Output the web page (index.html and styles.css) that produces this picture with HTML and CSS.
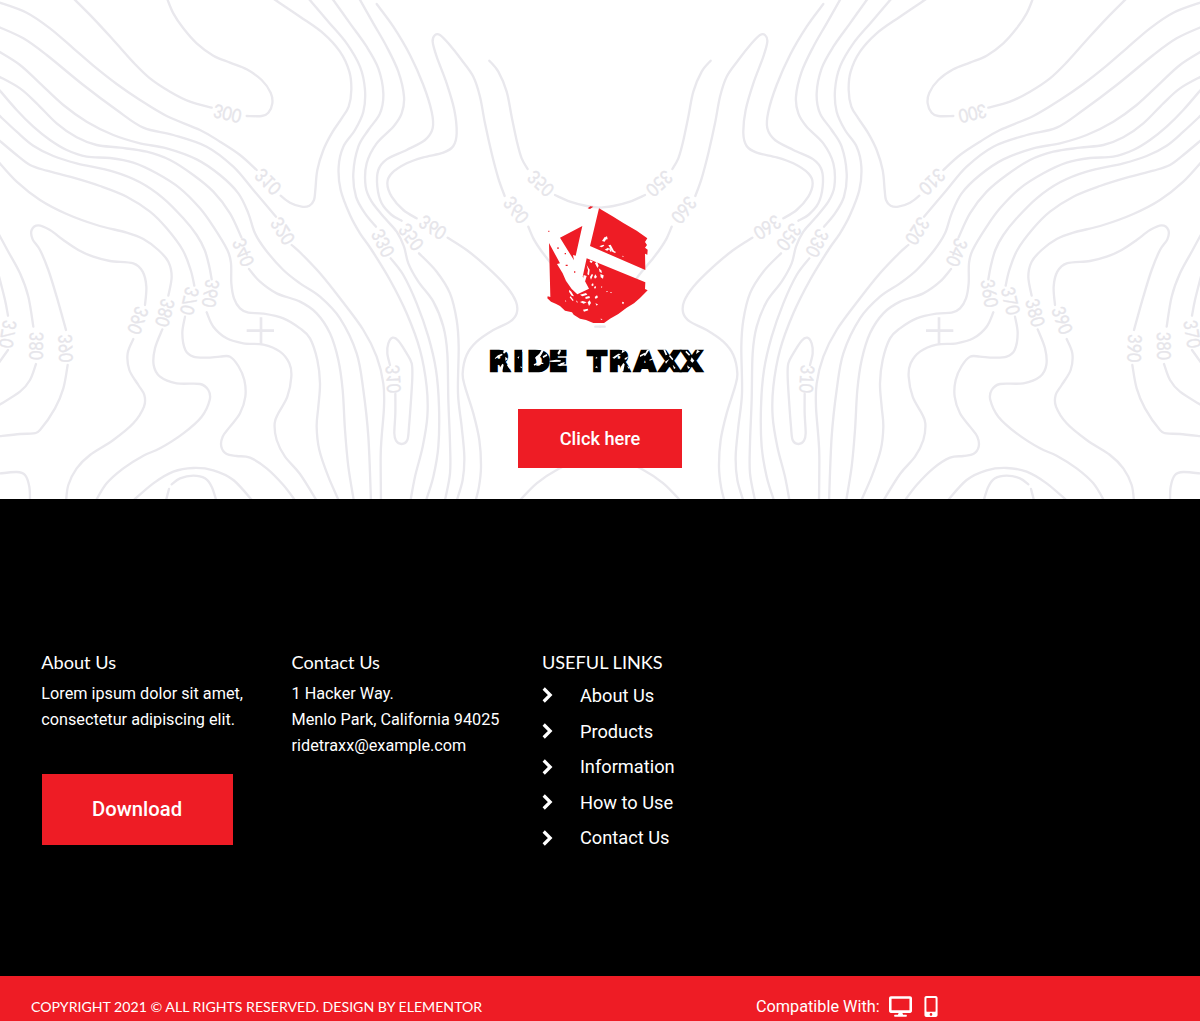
FILE: index.html
```html
<!DOCTYPE html>
<html lang="en">
<head>
<meta charset="utf-8">
<title>Ride Traxx</title>
<link rel="stylesheet" href="styles.css">
</head>
<body>
<section class="hero">
  <svg class="topo" viewBox="0 0 3600 1497" aria-hidden="true">
    <defs>
      <g id="half">
        <g id="lines" class="topo-lines"></g>
        <path class="topo-cross" d="M740 992H822M783 952V1035"/>
        <g id="labels" class="topo-labels"></g>
      </g>
    </defs>
    <use href="#half"/>
    <use href="#half" transform="translate(3600 0) scale(-1 1)"/>
  </svg>
  <svg class="logo" viewBox="0 0 720 540" role="img" aria-label="Ride Traxx">
    <g class="logo-mark">
      <path d="M357 40L400 65L430 84L470 107L502 130L495 141L501 150L495 158L503 164L502 179L495 176L496 225L330 153Z"/>
      <path d="M240 128L307 93L287 182L279 180L282 196Z"/>
      <path d="M207 144L240 205L231 207L248 235L258 258L275 282L292 298L327 281L308 245L320 190L496 262L495 282L503 286L480 309L462 325L440 338L415 357L390 371L372 384L340 384L318 375L300 371L281 359L276 352L255 347L240 333L227 326L213 320L202 310L203 304L211 306Z"/>
      <path d="M323 40L331 34L340 35L330 42ZM205 107h3v4h-3ZM232 157h4v5h-4ZM254 174h4v4h-4ZM257 209h6v4h-6ZM282 229h4v4h-4Z"/>
    </g>
    <path class="logo-wear" d="M366 138l8-12 6 4-6 10ZM376 126l5-2 2 8-3 2ZM385 151l7-2 10 19 6 3-3 3-8-4ZM358 154l12-5 3 3-8 5ZM374 164l10-6 4 4-6 5ZM390 159l5 10-3 2-5-9ZM427 182l5 2-4 2ZM320 210l9 14-2 17-5-3 2-12ZM311 240l9 3-6 20-6-5ZM330 246l6-10 3 4-6 14ZM345 205l6-5 5 12-3 7-4-6ZM356 220l8 6 2 8-7-3ZM361 237l10 4-2 10-7-4ZM346 238l5 8-6 5-3-5ZM330 196l8 3-3 5-6-3ZM268 284l6 6 8 14-7-2-8-12ZM272 304l9 12-3 2-9-11ZM300 299l18-5 4 5-15 5ZM316 306l12-3 2 6-13 3ZM300 321l8-3 12 4-9 4ZM323 322l6-6 4 8-6 9ZM309 344l14-3 2 5-13 4ZM344 306l7-5 3 6-7 5ZM342 276l5-3 1 6-4 2ZM363 274l4 1-2 5ZM378 289l6-1-3 4ZM427 320l5 2-2 6-4-3ZM390 291l6 1-3 3ZM361 371l7 1-4 3ZM334 269l5-5 2 7-5 3ZM290 316l4 7-5-2ZM346 325l8 3-4 4ZM280 270l6 8-4 1ZM256 315l3 5-4-1Z"/>
    <text class="logo-word" y="527" x="26 100 142 206 323 386 463 537 604">RIDETRAXX</text>
    <path class="logo-wear" d="M42 492l12-11 12-5 2 4-15 8ZM75 461l9 5-12 10-3-4ZM76 485l8 7-8 5ZM59 520l8-14 4 3-4 20h-7ZM85 506l8 12-5 3-7-10ZM112 487l6-3-2 7ZM126 464l5 5-4 2ZM122 513l5 5-5 1ZM165 488l13-12 8-13 5 4-9 16-12 14ZM161 508l16-7 14 3-2 3-14-1-12 6ZM188 484l12-7 2 5-12 7ZM209 497l20-3 14 2-2 4-22 1-10-1ZM232 475l7-12 4 4-6 13ZM242 505l12-4-1 5-13 8-4-3ZM348 485l5 4-6 2ZM345 517l6-4 2 7ZM397 488l18-12 8 1-20 14ZM427 464l8 5-10 6ZM435 489l11-5-8 10-5-1ZM422 516l8-12 4 4-4 21h-6ZM441 513l9 5-4 3ZM480 481l14-8 2 5-16 8ZM501 465l9-3-15 22-3-3ZM508 494l18-8 1 4-18 7ZM555 463l7 16-5 2-7-17ZM570 480l10 12-3 4-10-12ZM555 500l13-8-10 14ZM578 509l9 10-5 3ZM619 467l12 12-4 3-11-11ZM635 487l8 10-6 6-6-6ZM621 511l10 7-7 3ZM651 465l9 4-12 8ZM656 502l12 10-5 4Z"/>
  </svg>
  <a class="btn btn-hero">Click here</a>
</section>

<footer class="footer">
  <div class="col">
    <h2>About Us</h2>
    <p>Lorem ipsum dolor sit amet,<br>consectetur adipiscing elit.</p>
    <a class="btn btn-download">Download</a>
  </div>
  <div class="col">
    <h2>Contact Us</h2>
    <p>1 Hacker Way.<br>Menlo Park, California 94025<br>ridetraxx@example.com</p>
  </div>
  <div class="col">
    <h2>USEFUL LINKS</h2>
    <ul class="links">
      <li><svg viewBox="0 0 12 18"><path d="M1.700 2.500L8.200 9L1.700 15.500"/></svg>About Us</li>
      <li><svg viewBox="0 0 12 18"><path d="M1.700 2.500L8.200 9L1.700 15.500"/></svg>Products</li>
      <li><svg viewBox="0 0 12 18"><path d="M1.700 2.500L8.200 9L1.700 15.500"/></svg>Information</li>
      <li><svg viewBox="0 0 12 18"><path d="M1.700 2.500L8.200 9L1.700 15.500"/></svg>How to Use</li>
      <li><svg viewBox="0 0 12 18"><path d="M1.700 2.500L8.200 9L1.700 15.500"/></svg>Contact Us</li>
    </ul>
  </div>
</footer>

<div class="bottom">
  <div class="copyright">COPYRIGHT 2021 © ALL RIGHTS RESERVED. DESIGN BY ELEMENTOR</div>
  <div class="compat">
    <span>Compatible With:</span>
    <svg class="desktop" viewBox="0 0 576 512"><path d="M528 0H48C21.500 0 0 21.500 0 48v320c0 26.500 21.500 48 48 48h192l-16 48h-72c-13.300 0-24 10.700-24 24s10.700 24 24 24h272c13.300 0 24-10.700 24-24s-10.700-24-24-24h-72l-16-48h192c26.500 0 48-21.500 48-48V48c0-26.500-21.500-48-48-48zm-16 352H64V64h448v288z"/></svg>
    <svg class="mobile" viewBox="0 0 320 512"><path d="M272 0H48C21.500 0 0 21.500 0 48v416c0 26.500 21.500 48 48 48h224c26.500 0 48-21.500 48-48V48c0-26.500-21.500-48-48-48zM160 480c-17.700 0-32-14.300-32-32s14.300-32 32-32 32 14.300 32 32-14.300 32-32 32zm112-108c0 6.600-5.400 12-12 12H60c-6.600 0-12-5.400-12-12V60c0-6.600 5.400-12 12-12h200c6.600 0 12 5.400 12 12v312z"/></svg>
  </div>
</div>
<script src="contours.js"></script>
</body>
</html>
```

FILE: styles.css
```css
* { box-sizing: border-box; }

body {
  margin: 0;
  height: 1021px;
  display: flex;
  flex-direction: column;
  overflow: hidden;
  background: #000;
  color: #fff;
  font-family: Roboto, "Liberation Sans", sans-serif;
}

.hero {
  position: relative;
  flex: none;
  height: 499px;
  padding-top: 195px;
  display: flex;
  flex-direction: column;
  align-items: center;
  background: #fff;
}

.topo {
  position: absolute;
  top: 0;
  left: 0;
  width: 1200px;
  height: 499px;
}

.topo-lines, .topo-cross {
  fill: none;
  stroke: #e9e8ed;
  stroke-width: 7;
  stroke-linecap: round;
}
.topo-cross { stroke-width: 8; stroke-linecap: butt; }
.topo-labels {
  fill: #e6e5ea;
  stroke: #e6e5ea;
  stroke-width: 1;
  font-family: Lato, sans-serif;
  font-size: 57px;
  text-anchor: middle;
}

.logo {
  position: relative;
  width: 240px;
  height: 180px;
  overflow: visible;
}
.logo-mark { fill: #ee1c25; }
.logo-wear { fill: #fff; }
.logo-word {
  fill: #000;
  stroke: #000;
  stroke-width: 8;
  font-family: "DejaVu Sans", sans-serif;
  font-weight: 700;
  font-size: 82px;
}

.btn {
  display: flex;
  align-items: center;
  justify-content: center;
  background: #ee1c25;
  color: #fff;
  font-weight: 500;
}
.btn-hero {
  position: relative;
  width: 164px;
  height: 59px;
  margin-top: 34.4px;
  padding-bottom: 1px;
  font-size: 18.200px;
}

.footer {
  flex: none;
  height: 477.4px;
  padding: 149.500px 0 0 41.300px;
  display: grid;
  grid-template-columns: repeat(3, 250.300px);
  align-content: start;
}
.footer h2 {
  margin: 0;
  font: 400 18.150px/26px Lato, sans-serif;
}
.footer p {
  margin: 6px 0 0;
  font-size: 16.230px;
  line-height: 26.400px;
  white-space: nowrap;
}
.btn-download {
  width: 191px;
  height: 71px;
  margin: 40.500px 0 0 0.300px;
  font-size: 20.250px;
}

.links {
  margin: 3.200px 0 0;
  padding: 0;
  list-style: none;
}
.links li {
  display: flex;
  align-items: center;
  gap: 26px;
  height: 35.550px;
  font-size: 18.250px;
}
.links svg {
  width: 12px;
  height: 18px;
  fill: none;
  stroke: #fff;
  stroke-width: 3.200;
}

.bottom {
  flex: none;
  height: 60px;
  padding-left: 31px;
  display: grid;
  grid-template-columns: 725px 1fr;
  align-items: center;
  background: #ee1c25;
}
.copyright {
  font-family: Lato, sans-serif;
  font-size: 14.130px;
}
.compat {
  display: flex;
  align-items: center;
  font-size: 16.250px;
}
.compat svg { fill: #fff; }
.desktop { width: 23px; height: 21px; margin-left: 9px; }
.mobile { width: 14px; height: 21px; margin-left: 12px; }
```

FILE: contours.js
```js
// Elevation contours for one half of the map; the other half is its mirror.
const contours = [
  "820,-4 900,50 970,100 1020,155 1048,215 1054,270 1046,320 1025,355 995,400 970,450 952,510 946,570 942,600 928,617 905,620 870,608 842,587",
  "770,510 720,465 660,425 600,390 500,348 420,300 350,252 280,197 220,145 150,85 80,38 -6,6",
  "220,-5 280,55 340,120 400,187 450,235 510,275 570,305 635,323",
  "501,-5 520,40 550,85 590,130 640,167 690,188 740,208 785,240 812,278 817,310 805,338 785,348 740,348",
  "-6,80 70,115 140,165 250,255 350,330 430,383 520,405 620,440 700,500 760,570 828,650",
  "875,735 905,762 960,820 1020,895 1090,990 1130,1070 1150,1150 1152,1220 1145,1310 1142,1370 1143,1505",
  "-6,153 60,195 120,250 190,315 260,365 340,405 420,430 500,445 590,478 660,525 715,580 745,640 765,700 797,750 850,810 900,850 960,890 1020,955 1070,1060 1090,1170 1105,1310 1113,1505",
  "-6,228 60,265 110,310 170,370 230,412 290,435 360,443 440,455 510,480 580,525 640,575 690,640 724,712",
  "747,807 780,845 830,880 900,905 950,940 990,1000 1015,1080 1028,1170 1035,1290 1045,1400 1062,1505",
  "-6,265 50,330 100,380 150,420 200,450 260,470 330,474 400,488 470,520 540,565 600,625 640,680 682,750 693,790 694,850 702,895 720,925 745,938 790,941 850,955 900,985 930,1015 952,1080 960,1150 955,1220 950,1280 958,1350 985,1430 1018,1505",
  "-6,343 50,395 100,437 160,468 230,490 340,515 420,547 490,595 550,655 590,705 614,750 628,800 635,838",
  "620,937 640,980 680,1015 730,1030 790,1034 840,1055 868,1090 874,1130 862,1190 835,1240 824,1270 830,1320 855,1370 900,1422 952,1505",
  "-6,418 50,465 90,495 140,512 220,533 300,558 380,590 450,635 500,685 548,750 572,810 583,857",
  "555,950 547,1000 556,1050 580,1070 620,1073 660,1070 690,1070 715,1098 733,1140 736,1190 720,1240 690,1280 668,1310 664,1340 680,1362 710,1368 750,1373 800,1405 850,1455 888,1505",
  "-6,484 50,545 120,600 200,642 290,675 380,698 430,717 475,750 505,785 515,830 505,887",
  "487,988 465,1045 461,1095 480,1130 530,1150 600,1152 625,1170 629,1200 605,1250 550,1300 480,1345 430,1367 370,1405 320,1450 286,1505",
  "198,990 170,890 145,810 120,750 98,718 95,690 115,676 150,690 190,720 235,750 280,770 330,783 400,790 428,815 439,860 435,915",
  "400,1017 383,1060 388,1110 415,1155 433,1185 432,1220 400,1270 340,1320 270,1365 230,1405 205,1455 198,1505",
  "203,1095 190,1165 165,1225 120,1290 100,1300 60,1302 -6,1309",
  "-6,698 22,750 60,820 85,890 100,980",
  "108,1092 90,1140 60,1175 -6,1217",
  "-4,825 15,900 24,947",
  "24,1050 -6,1092",
  "-6,1421 50,1416 75,1425 88,1460 90,1505",
  "396,1505 460,1450 520,1415 580,1404 640,1411 700,1440 760,1505",
  "515,1453 540,1435 580,1427 615,1435 635,1460 650,1505",
  "507,1467 497,1505",
  "926,-4 985,65 1040,130 1080,200 1095,270 1090,335 1065,390 1030,440 1016,500 1022,570 1050,645 1080,700 1115,750 1170,840 1220,940 1260,1050 1280,1160 1282,1250 1268,1340 1245,1430 1231,1505",
  "997,-4 1050,70 1100,140 1135,205 1150,280 1140,340 1105,390 1075,440 1060,520 1068,590 1095,640 1128,680",
  "1172,775 1210,825 1250,910 1285,1010 1308,1110 1317,1220 1315,1340 1300,1430 1277,1505",
  "1078,-4 1120,70 1160,140 1195,215 1212,290 1205,340 1180,380 1130,430 1100,490 1097,560 1115,605 1155,655 1190,695 1212,740 1225,790 1255,845 1300,905 1330,980 1342,1060 1345,1200 1350,1330 1350,1420 1334,1505",
  "1130,12 1180,80 1230,165 1270,255 1295,335 1298,385 1275,420 1220,450 1160,478 1135,510 1132,560 1145,610 1175,645 1205,662",
  "1257,760 1310,815 1350,880 1370,960 1376,1040 1374,1180 1385,1280 1393,1370 1388,1440 1369,1505",
  "1250,655 1210,630 1175,590 1162,550 1175,520 1220,490 1270,472 1330,458 1360,438 1370,400 1363,330 1340,250 1310,170 1298,125 1305,105 1320,105 1345,130 1385,180 1420,230 1440,290 1455,370 1475,460 1495,535 1514,588",
  "1585,680 1600,715 1622,750 1645,780 1690,835 1740,915",
  "1786,980 1800,980",
  "1343,713 1400,750 1460,800 1520,860 1548,905 1550,940 1530,965 1480,990 1430,1025 1400,1065 1388,1120 1395,1160 1420,1240 1438,1320 1443,1400 1437,1460 1426,1505",
  "1468,182 1495,215 1520,275 1535,350 1552,430 1565,475 1583,507",
  "1665,585 1710,605 1760,618 1800,623",
  "1170,1095 1162,1060 1165,1030 1178,1013 1195,1022 1220,1060 1235,1090 1237,1130 1233,1200 1227,1280 1222,1320 1205,1332 1188,1322 1183,1300 1186,1240 1186,1182",
  "1556,1505 1610,1450 1675,1407 1740,1380 1800,1370"
];

// value, x, y, rotation
const labels = [
  [300, 682, 340, 167], [310, 804, 545, 135], [320, 848, 693, 123], [340, 730, 757, 112],
  [350, 1622, 550, 137], [360, 1548, 630, 128], [360, 1298, 682, 147], [350, 1233, 711, 126],
  [330, 1149, 729, 117], [360, 632, 880, 81], [370, 569, 903, 77], [380, 495, 938, 75],
  [390, 414, 961, 70], [390, 197, 1045, 92], [380, 109, 1038, 89], [370, 24, 1002, 81],
  [310, 1180, 1137, 94]
];

const NS = "http://www.w3.org/2000/svg";

// Smooth curve through every point (Catmull-Rom converted to Bezier segments).
function curve(list) {
  const p = list.split(" ").map(s => s.split(",").map(Number));
  let d = "M" + p[0];
  for (let i = 0; i < p.length - 1; i++) {
    const a = p[i - 1] || p[i], b = p[i], c = p[i + 1], e = p[i + 2] || c;
    d += "C" + [b[0] + (c[0] - a[0]) / 6, b[1] + (c[1] - a[1]) / 6,
      c[0] - (e[0] - b[0]) / 6, c[1] - (e[1] - b[1]) / 6, c[0], c[1]];
  }
  return d;
}

for (const list of contours) {
  const path = document.createElementNS(NS, "path");
  path.setAttribute("d", curve(list));
  document.getElementById("lines").append(path);
}

for (const [value, x, y, angle] of labels) {
  const text = document.createElementNS(NS, "text");
  text.setAttribute("transform", `translate(${x} ${y}) scale(-1 1) rotate(${angle})`);
  text.setAttribute("y", 20);
  text.setAttribute("textLength", 84);
  text.setAttribute("lengthAdjust", "spacingAndGlyphs");
  text.textContent = value;
  document.getElementById("labels").append(text);
}
```
